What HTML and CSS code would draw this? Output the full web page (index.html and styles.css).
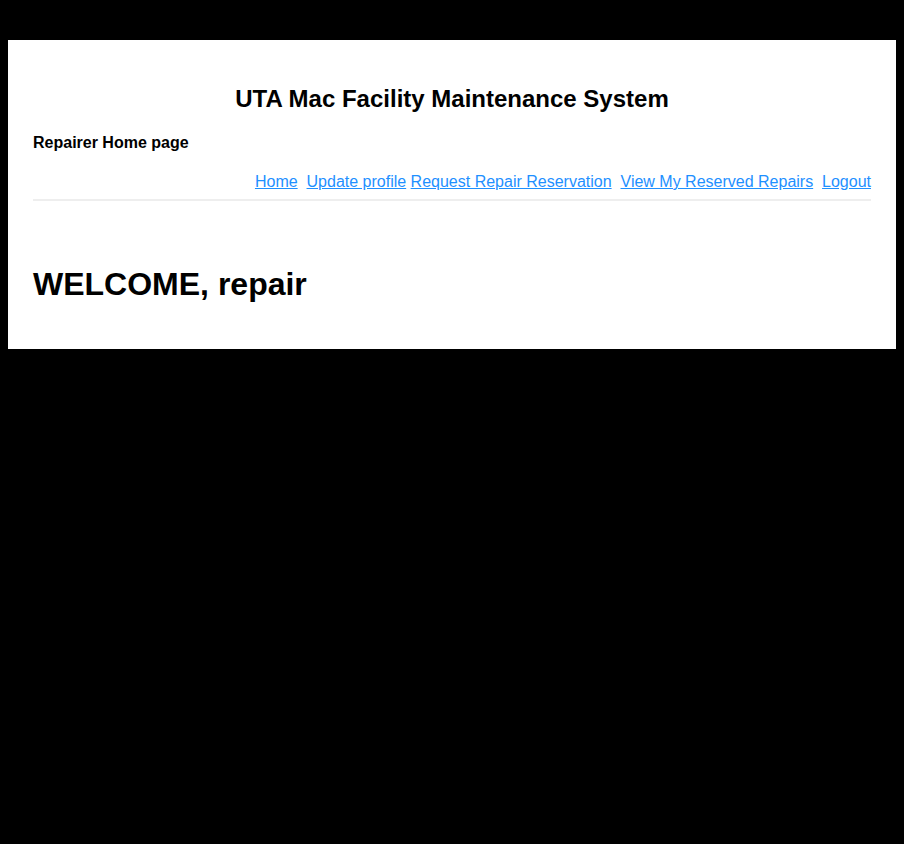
FILE: index.html
```html
<!DOCTYPE html>
<html>
<head>
<meta charset="utf-8">
<title>UTA Mac Facility Maintenance System</title>
<link rel="stylesheet" href="styles.css">
</head>
<body>
<div class="page">
  <h2 class="title">UTA Mac Facility Maintenance System</h2>
  <div class="subtitle">Repairer Home page</div>
  <nav class="nav">
    <a href="#">Home</a>&nbsp;
    <a href="#">Update profile</a>
    <a href="#">Request Repair Reservation</a>&nbsp;
    <a href="#">View My Reserved Repairs</a>&nbsp;
    <a href="#">Logout</a>
  </nav>
  <div class="rule"></div>
  <h1 class="welcome">WELCOME, repair</h1>
</div>
</body>
</html>
```
FILE: styles.css
```css
html, body {
  background: #000;
}
body {
  margin: 0;
  padding: 40px 8px 0;
  font-family: "Liberation Sans", Arial, sans-serif;
  color: #000;
}
.page {
  background: #fff;
  padding: 25px 25px 25px;
}
.title {
  margin: 20px 0 0;
  font-size: 24px;
  font-weight: bold;
  text-align: center;
  line-height: 28px;
}
.subtitle {
  margin-top: 21px;
  font-size: 16px;
  font-weight: bold;
  line-height: 18px;
}
.nav {
  margin-top: 21px;
  text-align: right;
  font-size: 16px;
  line-height: 18px;
}
.nav a {
  color: #1e90ff;
  text-decoration: underline;
}
.rule {
  margin-top: 8px;
  height: 2px;
  background: #eeeeee;
}
.welcome {
  margin: 65px 0 0;
  font-size: 32px;
  font-weight: bold;
  line-height: 37px;
  padding-bottom: 21px;
}
```
